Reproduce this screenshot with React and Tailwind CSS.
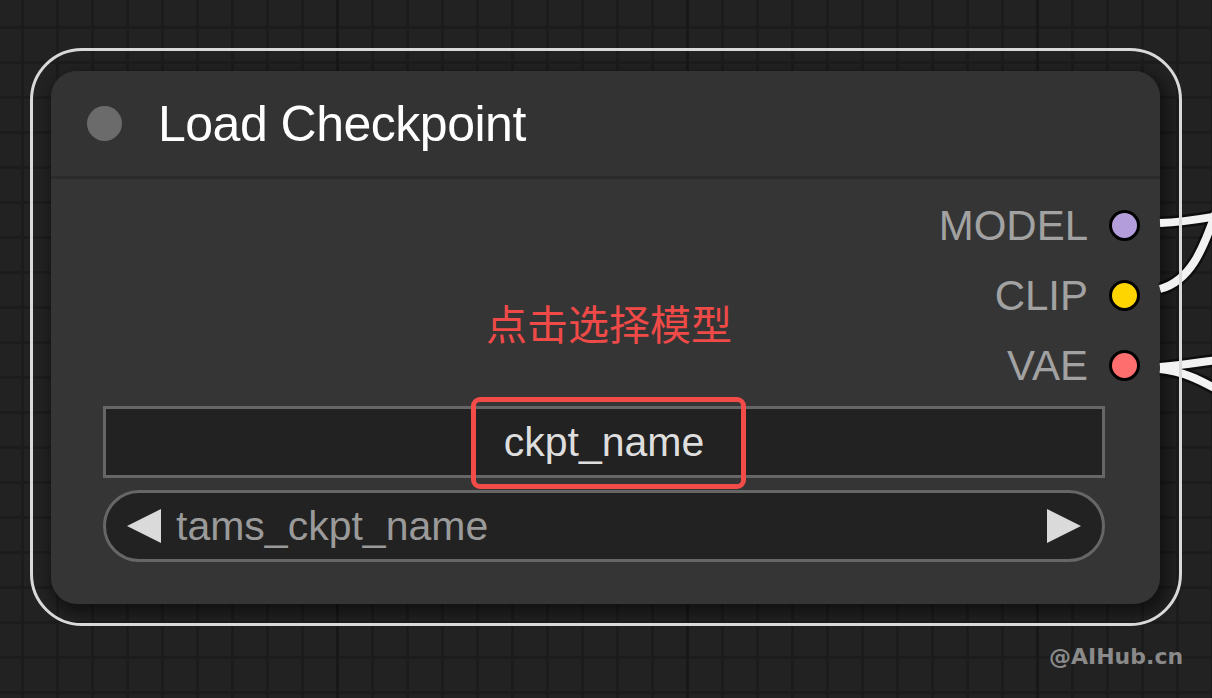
import React from "react";

function Dot({ color }) {
  return (
    <span
      className={`block w-[31px] h-[31px] rounded-full border-[3px] border-black ${color}`}
    />
  );
}

function OutputRow({ label, color }) {
  return (
    <div className="flex h-[70px] items-center justify-end gap-[21px] pr-[20px]">
      <span className="text-[42px] leading-none text-[#a2a2a2] translate-y-[1px]">{label}</span>
      <Dot color={color} />
    </div>
  );
}

export default function App() {
  return (
    <div
      className="relative w-[1212px] h-[698px] overflow-hidden bg-[#222222] bg-[linear-gradient(to_right,#181818_3px,transparent_3px),linear-gradient(to_right,#1c1c1c_3px,transparent_3px),linear-gradient(to_bottom,#1c1c1c_3px,transparent_3px)] bg-size-[350px_100%,35px_35px,35px_35px] bg-[length:350px_100%,35px_35px,35px_35px] bg-position-[336px_0,21px_0,0_26px] bg-[position:336px_0,21px_0,0_26px]"
      style={{ fontFamily: '"Liberation Sans", Arial, sans-serif' }}
    >
      <div className="pt-[48px] pl-[30px]">
        <div className="relative w-[1152px] h-[578px] pt-[23px] pl-[21px] after:content-[''] after:absolute after:inset-0 after:rounded-[52px] after:border-[3px] after:border-[#d9d9d9] after:z-30 after:pointer-events-none">
          {/* Node */}
          <div className="relative z-10 w-[1109px] h-[533px] rounded-[26px] bg-[#353535] shadow-[4px_6px_14px_4px_rgba(0,0,0,0.45)] flex flex-col overflow-hidden">
            <div className="h-[108px] shrink-0 bg-[#333333] border-b-[3px] border-[#2b2b2b] flex items-center pl-[36px] gap-[36px]">
              <span className="block w-[35px] h-[35px] rounded-full bg-[#6b6b6b]" />
              <span className="text-[50px] leading-none text-white tracking-[-0.5px]">
                Load Checkpoint
              </span>
            </div>
            <div className="flex flex-col pt-[11px]">
              <OutputRow label="MODEL" color="bg-[#b39ddb]" />
              <OutputRow label="CLIP" color="bg-[#ffd500]" />
              <OutputRow label="VAE" color="bg-[#ff6e6e]" />
              <div className="mt-[6px] ml-[52px] w-[1002px] h-[72px] border-[3px] border-[#666666] bg-[#222222] flex items-center justify-center">
                <span className="text-[41px] leading-none text-[#dedede]">ckpt_name</span>
              </div>
              <div className="mt-[12px] ml-[52px] w-[1002px] h-[72px] rounded-full border-[3px] border-[#666666] bg-[#222222] flex items-center pl-[20px] pr-[20px]">
                <svg width="36" height="36" viewBox="0 0 36 36" className="shrink-0">
                  <polygon points="35,1 35,35 1,18" fill="#dadada" />
                </svg>
                <span className="ml-[14px] text-[41px] leading-none text-[#9a9a9a]">
                  tams_ckpt_name
                </span>
                <svg width="36" height="36" viewBox="0 0 36 36" className="shrink-0 ml-auto">
                  <polygon points="1,1 1,35 35,18" fill="#dadada" />
                </svg>
              </div>
            </div>
          </div>
        </div>
      </div>

      {/* Wires */}
      <svg
        className="absolute left-0 top-0 z-20 pointer-events-none"
        width="1212"
        height="698"
        viewBox="0 0 1212 698"
      >
        <g fill="none" strokeLinecap="butt">
          <g stroke="rgba(0,0,0,0.55)" strokeWidth="13">
            <path d="M1160 223 C1185 222 1200 219 1218 216" />
            <path d="M1160 289 C1190 281 1203 250 1216 212" />
            <path d="M1160 367 C1185 365 1200 362 1218 360" />
            <path d="M1160 369 C1182 371 1200 380 1218 390" />
          </g>
          <g stroke="#f2f2f2" strokeWidth="8">
            <path d="M1160 223 C1185 222 1200 219 1218 216" />
            <path d="M1160 289 C1190 281 1203 250 1216 212" />
            <path d="M1160 367 C1185 365 1200 362 1218 360" />
            <path d="M1160 369 C1182 371 1200 380 1218 390" />
          </g>
        </g>
      </svg>

      {/* Annotation */}
      <div
        className="absolute left-[486px] top-[302px] z-20 text-[41px] leading-none text-[#f04a48]"
        style={{ fontFamily: '"Noto Sans CJK SC", "Liberation Sans", sans-serif' }}
      >
        点击选择模型
      </div>
      <div className="absolute left-[471px] top-[397px] z-20 w-[275px] h-[92px] rounded-[9px] border-[5px] border-[#f24b48]" />

      {/* Watermark */}
      <div
        className="absolute left-[1049px] top-[646px] z-20 text-[22px] leading-none font-bold text-[#8a8a8a]"
        style={{ fontFamily: '"DejaVu Sans", Verdana, sans-serif' }}
      >
        @AIHub.cn
      </div>
    </div>
  );
}
